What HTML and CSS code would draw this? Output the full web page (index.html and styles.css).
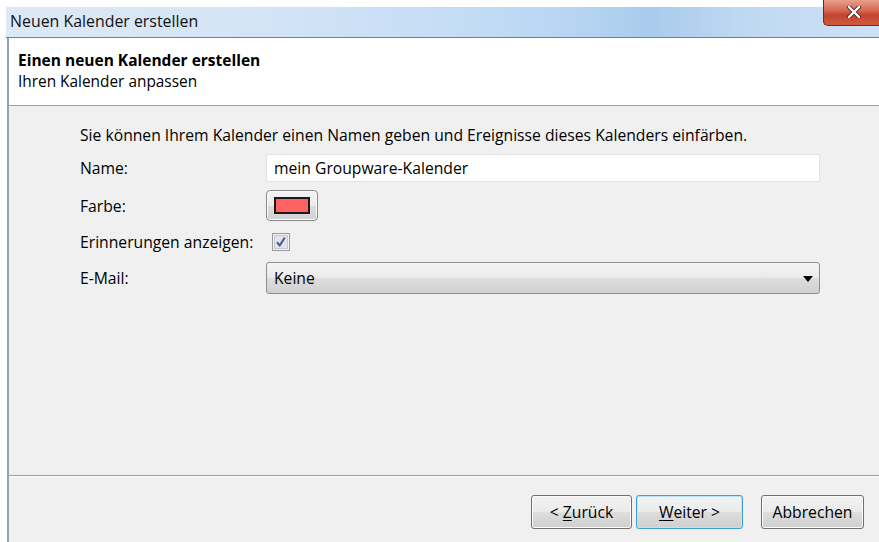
FILE: index.html
```html
<!DOCTYPE html>
<html lang="de">
<head>
<meta charset="utf-8">
<title>Neuen Kalender erstellen</title>
<link rel="stylesheet" href="styles.css">
</head>
<body>
<div class="window">
  <div class="titlebar">
    <span class="title">Neuen Kalender erstellen</span>
    <button class="close" aria-label="Schließen">
      <svg width="16" height="12" viewBox="0 0 16 12">
        <path d="M3 1 L13 11 M13 1 L3 11" stroke="#5a2a22" stroke-width="4.2" stroke-linecap="round"/>
        <path d="M3 1 L13 11 M13 1 L3 11" stroke="#ffffff" stroke-width="2.4" stroke-linecap="round"/>
      </svg>
    </button>
  </div>
  <div class="frame">
    <div class="header">
      <div class="header-title">Einen neuen Kalender erstellen</div>
      <div class="header-sub">Ihren Kalender anpassen</div>
    </div>
    <div class="content">
      <p class="intro">Sie können Ihrem Kalender einen Namen geben und Ereignisse dieses Kalenders einfärben.</p>
      <div class="form">
        <label class="label">Name:</label>
        <div class="field"><div class="textbox">mein Groupware-Kalender</div></div>

        <label class="label">Farbe:</label>
        <div class="field"><div class="colorbtn"><span class="swatch"></span></div></div>

        <label class="label">Erinnerungen anzeigen:</label>
        <div class="field">
          <span class="checkbox">
            <svg width="18" height="18" viewBox="0 0 18 18">
              <rect x="0.5" y="0.5" width="17" height="17" fill="#f4f4f4" stroke="#9a9a9a"/>
              <rect x="2.5" y="2.5" width="13" height="13" fill="#e3e5ea" stroke="#c4c7cf"/>
              <path d="M5 9.2 L7.6 12.6 L12.8 4.6" fill="none" stroke="#4a5f9a" stroke-width="2" stroke-linejoin="round"/>
            </svg>
          </span>
        </div>

        <label class="label">E-Mail:</label>
        <div class="field">
          <div class="select">
            <span>Keine</span>
            <svg class="arrow" width="10" height="6" viewBox="0 0 10 6"><path d="M0 0 H10 L5 6 Z" fill="#000"/></svg>
          </div>
        </div>
      </div>
    </div>
    <div class="footer">
      <button class="btn btn-back">&lt; <u>Z</u>urück</button>
      <button class="btn btn-next"><u>W</u>eiter &gt;</button>
      <button class="btn btn-cancel">Abbrechen</button>
    </div>
  </div>
</div>
</body>
</html>
```

FILE: styles.css
```css
html, body {
  margin: 0;
  padding: 0;
  background: #ffffff;
  height: 100%;
  overflow: hidden;
}

body {
  font-family: "Open Sans", "Noto Sans", sans-serif;
  font-size: 15.7px;
  color: #000;
}

.window {
  padding: 7px 0 0 6px;
  height: 535px;
  display: flex;
  flex-direction: column;
}

/* window caption */
.titlebar {
  height: 30px;
  display: flex;
  align-items: center;
  justify-content: space-between;
  padding-left: 4px;
  border-bottom: 1px solid #6d7f93;
  background: linear-gradient(90deg, #dde9f5 0%, #d3e4f6 30%, #c2dbf5 55%, #b6d4f2 66%, #a9cbec 74%, #bfd8f2 84%, #cde1f6 100%);
}

.title {
  font-size: 15.9px;
  color: #111;
  margin-top: -2px;
}

.close {
  align-self: flex-start;
  margin-top: -7px;
  width: 56px;
  height: 26px;
  padding: 0 0 7px 4px;
  border: 1px solid #6b2b23;
  border-top: none;
  border-right: none;
  border-radius: 0 0 0 5px;
  background: linear-gradient(180deg, #e9a08f 0%, #d96a55 40%, #c4442f 60%, #cf5a3f 100%);
  display: flex;
  align-items: flex-end;
  justify-content: center;
  box-sizing: border-box;
}

.frame {
  flex: 1;
  display: flex;
  flex-direction: column;
  border-left: 2px solid #8fa3bb;
  margin-left: 1px;
}

/* wizard page header */
.header {
  background: #ffffff;
  height: 68px;
  box-sizing: border-box;
  padding: 11px 0 0 9px;
  border-bottom: 1px solid #a0a0a0;
}

.header-title {
  font-weight: bold;
  font-size: 15.5px;
  line-height: 22px;
}

.header-sub {
  font-size: 15.4px;
  line-height: 22px;
}

/* page body */
.content {
  background: #f0f0f0;
  flex: 1;
  padding: 19px 0 0 71px;
  border-bottom: 1px solid #a0a0a0;
}

.intro {
  margin: 0 0 9px 0;
  line-height: 20px;
}

.form {
  display: grid;
  grid-template-columns: 186px 554px;
  grid-template-rows: 28px 31px 25px 32px;
  row-gap: 8px;
  align-items: center;
}

.label {
  line-height: 20px;
}

.field {
  display: flex;
  align-items: center;
  height: 100%;
}

.textbox {
  width: 100%;
  height: 100%;
  box-sizing: border-box;
  background: #fff;
  border: 1px solid #e2e2e2;
  padding-left: 7px;
  display: flex;
  align-items: center;
}

.colorbtn {
  width: 52px;
  height: 31px;
  box-sizing: border-box;
  border: 1px solid #8a8a8a;
  border-radius: 4px;
  background: linear-gradient(180deg, #f4f4f4 0%, #ebebeb 50%, #dcdcdc 51%, #d2d2d2 100%);
  box-shadow: inset 0 0 0 1px #fafafa;
  display: flex;
  align-items: center;
  justify-content: center;
}

.swatch {
  width: 36px;
  height: 17px;
  box-sizing: border-box;
  background: #ff6262;
  border: 2px solid #1a1a1a;
}

.checkbox {
  display: flex;
  margin-left: 6px;
}

.select {
  width: 100%;
  height: 100%;
  box-sizing: border-box;
  border: 1px solid #8e8e8e;
  border-radius: 3px;
  background: linear-gradient(180deg, #f3f3f3 0%, #ebebeb 48%, #dddddd 52%, #d0d0d0 100%);
  display: flex;
  align-items: center;
  justify-content: space-between;
  padding: 0 6px 0 7px;
}

.arrow {
  margin-top: 1px;
}

/* button row */
.footer {
  background: #f0f0f0;
  border-top: 1px solid #ffffff;
  height: 66px;
  box-sizing: border-box;
  display: flex;
  justify-content: flex-end;
  align-items: flex-start;
  padding: 18px 15px 0 0;
}

.btn {
  font-family: inherit;
  font-size: 15.7px;
  color: #000;
  height: 34px;
  box-sizing: border-box;
  border: 1px solid #707070;
  border-radius: 3px;
  background: linear-gradient(180deg, #f2f2f2 0%, #ebebeb 48%, #dddddd 52%, #cfcfcf 100%);
  box-shadow: inset 0 0 0 1px #fbfbfb;
  padding: 0;
}

.btn u {
  text-underline-offset: 2px;
}

.btn-back {
  width: 101px;
}

.btn-next {
  width: 107px;
  margin-left: 4px;
  border-color: #3c9fd8;
  box-shadow: inset 0 0 0 1px #bfe4f7;
}

.btn-cancel {
  width: 103px;
  margin-left: 18px;
}
```
